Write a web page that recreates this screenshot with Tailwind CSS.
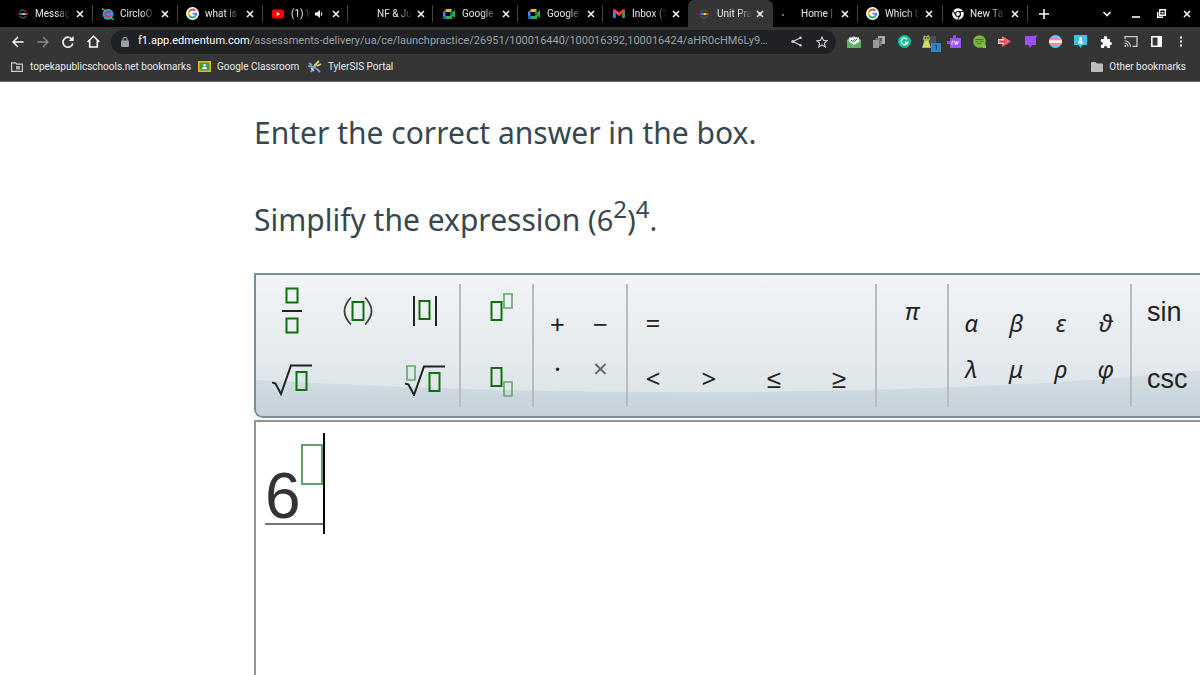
<!DOCTYPE html>
<html lang="en">
<head>
<meta charset="utf-8">
<title>Unit Practice</title>
<script src="https://cdn.jsdelivr.net/npm/@tailwindcss/browser@4"></script>
</head>
<body class="h-screen overflow-hidden flex flex-col bg-white font-['Roboto',sans-serif]">
<svg class="hidden">
  <defs>
    <symbol id="x" viewBox="0 0 8 8"><path d="M1 1l6 6M7 1l-6 6" stroke="#fff" stroke-width="1.5"/></symbol>
    <symbol id="google" viewBox="0 0 24 24"><circle cx="12" cy="12" r="12" fill="#fff"/><g fill="none" stroke-width="3.6"><path d="M17.2 7A7.2 7.2 0 0 0 5.8 8.4" stroke="#ea4335"/><path d="M5.8 8.4a7.2 7.2 0 0 0 0 7.2" stroke="#fbbc05"/><path d="M5.8 15.6a7.2 7.2 0 0 0 10.8 2" stroke="#34a853"/><path d="M16.6 17.6a7.2 7.2 0 0 0 2.5-5.4H12" stroke="#4285f4"/></g></symbol>
    <symbol id="meet" viewBox="0 0 24 20"><path d="M0 6l6-6v6z" fill="#ea4335"/><path d="M6 0h11v6H6z" fill="#fbbc04"/><path d="M0 6h5v9H0z" fill="#4285f4"/><path d="M0 14h6v6H2q-2 0-2-2z" fill="#1967d2"/><path d="M6 14h8v-3l5-5v12q0 2-2 2H6z" fill="#34a853"/><path d="M17 8l7-6v16l-7-6z" fill="#34a853"/><path d="M14 5h5v6l-5 3z" fill="#00832d"/></symbol>
    <symbol id="edm" viewBox="0 0 12 12"><path d="M2.500 4Q6 0 9.500 4M2.500 8Q6 12 9.500 8" fill="none" stroke="#4c4c4c" stroke-width="1.300"/><path d="M1.500 5h2v2h-2z" fill="#e6007e"/><path d="M3.500 5H6v2H3.500z" fill="#00b5e8"/><path d="M6 5h2.500v2H6z" fill="#ffd400"/><path d="M8.500 5h2v2h-2z" fill="#e6307e"/></symbol>
  </defs>
</svg>

<header class="shrink-0 bg-[#353535] border-b border-[#6b6b6b] text-[#e8eaed]">
  <!-- Tab strip -->
  <nav aria-label="Tabs" class="flex h-[27px] bg-black pl-2 text-[10px] pr-[3px]">
    <div class="flex w-[85px] items-center pl-[9px] my-[5px] border-r border-[#444]"><svg class="size-3 mr-[6px]"><use href="#edm"/></svg><span class="w-[35px] overflow-hidden whitespace-nowrap mask-r-from-60%">Messages</span><button aria-label="Close" class="ml-[6px]"><svg class="size-2"><use href="#x"/></svg></button></div>
    <div class="flex w-[85px] items-center pl-[9px] my-[5px] border-r border-[#444]"><svg class="size-3 mr-[6px]" viewBox="0 0 12 12"><circle cx="6" cy="6.300" r="5.500" fill="#2a9be8"/><path d="M8.300 4.500A2.700 2.700 0 1 0 8.300 8" fill="none" stroke="#e5322d" stroke-width="1.800"/><path d="M0 .5l3.500 2.500M9 9.500l3 2.500" stroke="#5bd02e" stroke-width="1.300"/></svg><span class="w-[35px] overflow-hidden whitespace-nowrap mask-r-from-60%">CircloO 2</span><button aria-label="Close" class="ml-[6px]"><svg class="size-2"><use href="#x"/></svg></button></div>
    <div class="flex w-[85px] items-center pl-[8px] my-[5px] border-r border-[#444]"><svg class="size-[13px] mr-[6px]"><use href="#google"/></svg><span class="w-[35px] overflow-hidden whitespace-nowrap mask-r-from-60%">what is the</span><button aria-label="Close" class="ml-[6px]"><svg class="size-2"><use href="#x"/></svg></button></div>
    <div class="flex w-[85px] items-center pl-[9px] my-[5px] border-r border-[#444]"><svg class="size-3 mr-[7px]" viewBox="0 0 12 12"><rect y="1.500" width="12" height="9" rx="2" fill="#f00"/><path d="M4.800 4v4l3.400-2z" fill="#fff"/></svg><span class="w-[19px] overflow-hidden whitespace-nowrap mask-r-from-60%">(1) We</span><svg class="size-2 ml-[5px]" viewBox="0 0 8 8"><path d="M0 2.600h2L5 0v8L2 5.400H0z" fill="#fff"/><path d="M6.200 2.200q1.400 1.800 0 3.600" fill="none" stroke="#fff"/></svg><button aria-label="Close" class="ml-[9px]"><svg class="size-2"><use href="#x"/></svg></button></div>
    <div class="flex w-[85px] items-center pl-[29px] my-[5px] border-r border-[#444]"><span class="w-[35px] overflow-hidden whitespace-nowrap mask-r-from-60%">NF &amp; Juice</span><button aria-label="Close" class="ml-[5px]"><svg class="size-2"><use href="#x"/></svg></button></div>
    <div class="flex w-[85px] items-center pl-[10px] my-[5px] border-r border-[#444]"><svg class="w-3 h-[10px] mr-[7px]"><use href="#meet"/></svg><span class="w-[35px] overflow-hidden whitespace-nowrap mask-r-from-60%">Google Meet</span><button aria-label="Close" class="ml-[5px]"><svg class="size-2"><use href="#x"/></svg></button></div>
    <div class="flex w-[85px] items-center pl-[10px] my-[5px] border-r border-[#444]"><svg class="w-3 h-[10px] mr-[7px]"><use href="#meet"/></svg><span class="w-[35px] overflow-hidden whitespace-nowrap mask-r-from-60%">Google Meet</span><button aria-label="Close" class="ml-[5px]"><svg class="size-2"><use href="#x"/></svg></button></div>
    <div class="flex w-[85px] items-center pl-[10px] my-[5px]"><svg class="w-3 h-[9px] mr-[7px]" viewBox="0 0 12 9"><path d="M0 1h2.800v8H1Q0 9 0 8z" fill="#4285f4"/><path d="M9.200 1H12v7q0 1-1 1H9.200z" fill="#34a853"/><path d="M0 2.500V1q.8-1.500 2.400-.6L6 3.200 9.600.4Q11.200-.5 12 1v1.500L6 7z" fill="#ea4335"/></svg><span class="w-[35px] overflow-hidden whitespace-nowrap mask-r-from-60%">Inbox (12)</span><button aria-label="Close" class="ml-[5px]"><svg class="size-2"><use href="#x"/></svg></button></div>
    <div class="flex w-[85px] items-center pl-[10px] rounded-t-[6px] bg-[#353535]"><svg class="size-3 mr-[7px]"><use href="#edm"/></svg><span class="w-[35px] overflow-hidden whitespace-nowrap mask-r-from-60%">Unit Practice</span><button aria-label="Close" class="ml-[4px]"><svg class="size-2"><use href="#x"/></svg></button></div>
    <div class="flex w-[85px] items-center pl-[9px] my-[5px] border-r border-[#444]"><svg class="size-3 mr-[7px]" viewBox="0 0 12 12"><rect y="6" width="2" height="2" fill="#2b7de9"/></svg><span class="w-[34px] overflow-hidden whitespace-nowrap mask-r-from-80%">Home | D</span><button aria-label="Close" class="ml-[6px]"><svg class="size-2"><use href="#x"/></svg></button></div>
    <div class="flex w-[85px] items-center pl-[8px] my-[5px] border-r border-[#444]"><svg class="size-[13px] mr-[6px]"><use href="#google"/></svg><span class="w-[35px] overflow-hidden whitespace-nowrap mask-r-from-60%">Which best</span><button aria-label="Close" class="ml-[5px]"><svg class="size-2"><use href="#x"/></svg></button></div>
    <div class="flex w-[85px] items-center pl-[9px] my-[5px] border-r border-[#444]"><svg class="size-3 mr-[6px]" viewBox="0 0 12 12"><circle cx="6" cy="6" r="5.800" fill="#fff"/><circle cx="6" cy="6" r="2.500" fill="#fff" stroke="#111" stroke-width="1.200"/><path d="M6 3.500h5M3.800 7.200L1.300 3M8.200 7.200L5.700 11.600" stroke="#111" stroke-width="1.100"/></svg><span class="w-[35px] overflow-hidden whitespace-nowrap mask-r-from-60%">New Tab</span><button aria-label="Close" class="ml-[6px]"><svg class="size-2"><use href="#x"/></svg></button></div>
    <button aria-label="New tab" class="ml-[11px]"><svg class="size-[10px]" viewBox="0 0 10 10"><path d="M5 0v10M0 5h10" stroke="#fff" stroke-width="1.500"/></svg></button>
    <div class="ml-auto flex items-center gap-[17px] pr-[6px]">
      <button aria-label="Search tabs"><svg class="size-[10px]" viewBox="0 0 10 10"><path d="M1.500 3L5 6.500 8.500 3" fill="none" stroke="#fff" stroke-width="1.600"/></svg></button>
      <button aria-label="Minimize" class="ml-[3px]"><svg class="size-2" viewBox="0 0 8 8"><path d="M0 7h8" stroke="#fff" stroke-width="1.600"/></svg></button>
      <button aria-label="Restore"><svg class="size-[9px]" viewBox="0 0 9 9"><path d="M2.700.7h5.600v5.600H2.700zM.7 3v5.300H6" fill="none" stroke="#fff" stroke-width="1.400"/><path d="M4.500 3h2v1.500h-2z" fill="#fff"/></svg></button>
      <button aria-label="Close window"><svg class="size-2"><use href="#x"/></svg></button>
    </div>
  </nav>

  <!-- Address bar -->
  <div class="flex h-[29px] items-center pl-[5px] pr-[6px]">
    <div class="grid w-[101px] grid-cols-4 justify-items-center">
      <button aria-label="Back"><svg class="size-3" viewBox="0 0 12 12"><path d="M11.500 6H1.500M6 1L1 6l5 5" fill="none" stroke="#fff" stroke-width="1.500"/></svg></button>
      <button aria-label="Forward"><svg class="size-3" viewBox="0 0 12 12"><path d="M.5 6h10M6 1l5 5-5 5" fill="none" stroke="#8a8a8a" stroke-width="1.400"/></svg></button>
      <button aria-label="Reload"><svg class="size-3" viewBox="0 0 12 12"><path d="M10 3.200A5 5 0 1 0 10.800 7.500" fill="none" stroke="#fff" stroke-width="1.600"/><path d="M11.600 0v5H6.800z" fill="#fff"/></svg></button>
      <button aria-label="Home"><svg class="size-[13px]" viewBox="0 0 13 13"><path d="M.6 7L6.500 1.200 12.400 7M2.700 5.500V12h7.600V5.500" fill="none" stroke="#fff" stroke-width="1.500"/></svg></button>
    </div>
    <div class="ml-[5px] flex h-6 min-w-0 flex-1 items-center rounded-full bg-[#202124] pl-[10px] pr-2">
      <svg class="mr-[9px] h-[10px] w-2 shrink-0" viewBox="0 0 8 10"><rect y="3.500" width="8" height="6.500" rx="1" fill="#9aa0a6"/><path d="M2 4V2.500a2 2 0 0 1 4 0V4" fill="none" stroke="#9aa0a6" stroke-width="1.200"/></svg>
      <div role="textbox" aria-label="Address" class="flex-1 whitespace-nowrap text-[11px] text-[#9aa0a6]"><span class="text-white">f1.app.edmentum.com</span>/assessments-delivery/ua/ce/launchpractice/26951/100016440/100016392,100016424/aHR0cHM6Ly9…</div>
      <button aria-label="Share"><svg class="size-[11px]" viewBox="0 0 11 11"><path d="M10 1.500L2 5.500l8 4" fill="none" stroke="#ccc" stroke-width="1.200"/><circle cx="9.500" cy="1.700" r="1.300" fill="#ccc"/><circle cx="1.800" cy="5.500" r="1.500" fill="#ccc"/><circle cx="9.500" cy="9.300" r="1.300" fill="#ccc"/></svg></button>
      <button aria-label="Bookmark" class="ml-[14px]"><svg class="size-3" viewBox="0 0 12 12"><path d="M6 1l1.500 3.400 3.700.3-2.800 2.500.8 3.700L6 9l-3.200 1.900.8-3.700L.8 4.700l3.700-.3z" fill="none" stroke="#ccc" stroke-width="1.100"/></svg></button>
    </div>
    <div class="ml-[5px] grid w-[353px] shrink-0 grid-cols-14 items-center justify-items-center">
      <button aria-label="Mail"><svg class="h-3 w-[14px]" viewBox="0 0 14 12"><path d="M0 4l7-4 7 4v8H0z" fill="#7cc47f"/><path d="M2 1.500h10V6L7 9 2 6z" fill="#fff"/><path d="M0 4.500L7 9l7-4.500V12H0z" fill="#62b066"/><path d="M4 3.800l1.500 2L8 3M6.500 4.800l1 1L10 3" fill="none" stroke="#3952c4"/></svg></button>
      <button aria-label="Copy"><svg class="size-3" viewBox="0 0 12 12"><path d="M5 0h7v8H5z" fill="#aaa"/><path d="M2.500 2h6v8h-6z" fill="#777"/><path d="M0 4h6v8H0z" fill="#999"/><path d="M7 2h2v3H7z" fill="#555"/></svg></button>
      <button aria-label="Grammarly"><svg class="size-[13px]" viewBox="0 0 13 13"><circle cx="6.500" cy="6.500" r="6.500" fill="#15c39a"/><path d="M9 4.200A3.300 3.300 0 1 0 9.600 7.500H7" fill="none" stroke="#fff" stroke-width="1.300"/></svg></button>
      <button aria-label="Extension, 1 notice" class="relative"><svg class="h-[13px] w-[14px]" viewBox="0 0 14 13"><path d="M8 1h6v8H8z" fill="#46505a"/><path d="M2 0l2 1.500L7 0l1 4-1 2 2 7H0l2-7-1-2z" fill="#aab85a"/><path d="M3 6h3l2 6H1z" fill="#d9dc6a"/><circle cx="3.500" cy="3" r=".8" fill="#222"/><circle cx="6" cy="3" r=".8" fill="#222"/></svg><span class="absolute left-[9px] top-[8px] h-[9px] w-[10px] bg-[#2d86c0] text-center text-[8px] leading-[9px] text-[#10202c]">1</span></button>
      <button aria-label="Read&amp;Write"><svg class="h-[13px] w-[14px]" viewBox="0 0 14 13"><path d="M3 3h3V1q2-2 3 0v2h5v10H3V9H0V6h3z" fill="#9b51f5"/><path d="M5 10V7q0-1 1.500-1M7.500 6l.9 3.500.9-3 .9 3L11.500 6" fill="none" stroke="#fff" stroke-width=".9"/></svg></button>
      <button aria-label="Notes"><svg class="size-[13px]" viewBox="0 0 13 13"><circle cx="6.500" cy="6.500" r="6.300" fill="#7cb342"/><path d="M2.500 4.500h8M2.500 6.500h3M7 6.500h3.500M4 8.500h4" stroke="#3f6320" stroke-width=".8"/><path d="M9.500 9.500H13V13H9.500z" fill="#8bc34a"/></svg></button>
      <button aria-label="Screencast"><svg class="h-[11px] w-[13px]" viewBox="0 0 13 11"><path d="M4 0l9 5.500L4 11z" fill="#ff6b6b"/><path d="M0 3h6v5H0z" fill="#ffd9d9"/><path d="M1 4.500h5v2H1zM6 4l3 1.500L6 7z" fill="#e33"/></svg></button>
      <button aria-label="Comment"><svg class="size-[13px]" viewBox="0 0 13 13"><path d="M1 1h9l3-1-1 3v7H8l-2 3-1-3H1z" fill="#9b51f5"/></svg></button>
      <button aria-label="Flag"><svg class="size-[13px]" viewBox="0 0 13 13"><clipPath id="fc"><circle cx="6.500" cy="6.500" r="6.500"/></clipPath><g clip-path="url(#fc)"><path d="M0 0h13v13H0z" fill="#5bcefa"/><path d="M0 2.800h13v7.400H0z" fill="#f58a9d"/><path d="M0 5.300h13v2.400H0z" fill="#fff"/></g></svg></button>
      <button aria-label="Class"><svg class="size-[13px]" viewBox="0 0 13 13"><path d="M0 0h13v10H8.500l-2 3-2-3H0z" fill="#3fc1e6"/><circle cx="6.500" cy="3.500" r="1.500" fill="#fff"/><path d="M4 8.500q0-3.500 2.500-3.500T9 8.500z" fill="#fff"/></svg></button>
      <button aria-label="Extensions"><svg class="size-3" viewBox="0 0 12 12"><path d="M1 3h3q-.6-3 1.500-3T7 3h3v3q2 0 2 1.500T10 9v3H7.300Q7 9.800 5.600 9.800T4 12H1V9q2-.2 2-1.600T.8 6z" fill="#fff"/></svg></button>
      <button aria-label="Cast"><svg class="h-[11px] w-[14px]" viewBox="0 0 14 11"><path d="M1 3V.7h12v9.600H8.500" fill="none" stroke="#ccc" stroke-width="1.300"/><path d="M.5 4.700a6 6 0 0 1 6 6M.5 7.200a3.500 3.500 0 0 1 3.500 3.500" fill="none" stroke="#ccc" stroke-width="1.100"/><circle cx="1.300" cy="10" r="1" fill="#ccc"/></svg></button>
      <button aria-label="Side panel"><svg class="size-[11px]" viewBox="0 0 11 11"><path d="M.8.8h9.400v9.400H.8z" fill="none" stroke="#fff" stroke-width="1.600"/><path d="M6.500 1H10v9H6.500z" fill="#fff"/></svg></button>
      <button aria-label="Menu"><svg class="h-[11px] w-1" viewBox="0 0 4 11"><path d="M1 .5h2v2H1zM1 4.500h2v2H1zM1 8.500h2v2H1z" fill="#fff"/></svg></button>
    </div>
  </div>

  <!-- Bookmarks bar -->
  <nav aria-label="Bookmarks" class="flex h-[25px] items-center pb-[4px] pl-[11px] pr-[14px] text-[10px]">
    <a href="#" class="flex w-[187px] items-center gap-[7px] whitespace-nowrap"><svg class="h-[10px] w-3" viewBox="0 0 12 10"><path d="M.6.8h4l1.200 1.400h5.600v7.200H.6z" fill="none" stroke="#ccc" stroke-width="1.200"/><path d="M5 4h4v3.500H5z" fill="#aaa"/></svg>topekapublicschools.net bookmarks</a>
    <a href="#" class="flex w-[110px] items-center gap-[6px] whitespace-nowrap"><svg class="h-[11px] w-[13px]" viewBox="0 0 13 11"><path d="M0 0h13v11H0z" fill="#f4b400"/><path d="M1.600 1.600h9.800v7.800H1.600z" fill="#2e9e5b"/><circle cx="6.500" cy="4.200" r="1.300" fill="#fff"/><path d="M3.800 8q0-2 2.700-2t2.700 2z" fill="#fff"/></svg>Google Classroom</a>
    <a href="#" class="flex items-center gap-[6px] whitespace-nowrap"><svg class="h-[13px] w-[14px]" viewBox="0 0 14 13"><path d="M1 3l3 2M0 6l5 1 4 2 3 3M3 12l2-4 4-4" fill="none" stroke="#7f9fd0" stroke-width="1.900"/><path d="M6 6l5-5M9 6l4-2" stroke="#d8d36a" stroke-width="1.800"/><path d="M3 8l3 3" stroke="#dfe9f5" stroke-width="1.300"/></svg>TylerSIS Portal</a>
    <a href="#" class="ml-auto flex items-center gap-[6px]"><svg class="h-[10px] w-3" viewBox="0 0 12 10"><path d="M0 1q0-1 1-1h3.500L6 1.500h5q1 0 1 1V9q0 1-1 1H1q-1 0-1-1z" fill="#bdbdbd"/></svg>Other bookmarks</a>
  </nav>
</header>

<main class="flex min-h-0 flex-1 flex-col pl-[254px] font-['Noto_Sans',sans-serif] text-[#37474f]">
  <p class="mt-[29px] text-[30px] leading-[44px]">Enter the correct answer in the box.</p>
  <p class="mt-[42px] h-[44px] text-[30px] leading-[44px]">Simplify the expression <span class="text-[29px] leading-none">(6<span class="align-[13px] text-[24px]">2</span>)<span class="align-[13px] text-[24px]">4</span>.</span></p>

  <!-- Equation toolbar -->
  <div role="toolbar" aria-label="Equation tools" class="relative mt-[32px] flex h-[145px] shrink-0 overflow-hidden rounded-bl-[9px] border-2 border-r-0 border-[#758e9b] bg-linear-to-b from-[#f2f4f6] to-[#dae3e8] py-[9px] text-[26px] text-[#222]">
    <svg class="absolute inset-0 size-full" viewBox="0 0 944 141" preserveAspectRatio="none"><defs><linearGradient id="wave" x2="0" y2="1"><stop stop-color="#d5dfe5"/><stop offset="1" stop-color="#c4d1d9"/></linearGradient></defs><path d="M0 105C200 116 350 118 500 117 700 115 850 106 944 95V141H0z" fill="url(#wave)"/></svg>
    <div class="relative grid w-[205px] grid-cols-[67px_65px_69px] grid-rows-[54px_54px] gap-y-[15px] place-items-center border-r-2 border-[#bbb] pl-[2px]">
      <button aria-label="Fraction"><svg class="h-12 w-5" viewBox="0 0 20 48"><path d="M4.500 1.500h11v14h-11zM4.500 31.500h11v14h-11z" fill="none" stroke="#107010" stroke-width="2"/><path d="M0 24h20" stroke="#222" stroke-width="2"/></svg></button>
      <button aria-label="Parentheses"><svg class="h-7 w-[30px]" viewBox="0 0 30 28"><path d="M8 .5Q-5 14 8 27.500M22 .5q13 13.500 0 27" fill="none" stroke="#444" stroke-width="1.800"/><path d="M9.500 5h11v18h-11z" fill="none" stroke="#107010" stroke-width="2"/></svg></button>
      <button aria-label="Absolute value"><svg class="h-[30px] w-[26px]" viewBox="0 0 26 30"><path d="M2 0v30M24 0v30" stroke="#222" stroke-width="2"/><path d="M7.500 5h10v18h-10z" fill="none" stroke="#107010" stroke-width="2"/></svg></button>
      <button aria-label="Square root"><svg class="h-8 w-10" viewBox="0 0 40 32"><path d="M0 18.500l3.500 1L9 30 19 1.500h21" fill="none" stroke="#222" stroke-width="2"/><path d="M24.500 8h10v18h-10z" fill="none" stroke="#107010" stroke-width="2"/></svg></button>
      <button aria-label="Nth root" class="col-start-3"><svg class="h-8 w-10" viewBox="0 0 40 32"><path d="M0 19.500l3.500 1L9 31 19 2.500h21" fill="none" stroke="#222" stroke-width="2"/><path d="M2 2h8v14H2z" fill="none" stroke="#6aa96a" stroke-width="1.700"/><path d="M24.500 9h10v18h-10z" fill="none" stroke="#107010" stroke-width="2"/></svg></button>
    </div>
    <div class="relative grid w-[73px] grid-rows-[54px_54px] gap-y-[15px] place-items-center border-r-2 border-[#bbb] pl-[11px]">
      <button aria-label="Superscript"><svg class="h-[36px] w-6" viewBox="0 0 24 36"><path d="M1.500 9h10v18h-10z" fill="none" stroke="#107010" stroke-width="2"/><path d="M14 1h8v14h-8z" fill="none" stroke="#6aa96a" stroke-width="1.700"/></svg></button>
      <button aria-label="Subscript"><svg class="h-[34px] w-6" viewBox="0 0 24 34"><path d="M1.500 5h10v18h-10z" fill="none" stroke="#107010" stroke-width="2"/><path d="M14 19h8v14h-8z" fill="none" stroke="#6aa96a" stroke-width="1.700"/></svg></button>
    </div>
    <div class="relative grid w-[94px] grid-cols-[43px_43px] grid-rows-[44px_44px] place-items-center border-r-2 border-[#bbb] pl-[2px] pt-[18px] leading-none">
      <button>+</button><button>−</button><button>·</button><button class="text-[#666]">×</button>
    </div>
    <div class="relative grid w-[249px] grid-cols-[50px_62px_68px_62px] grid-rows-[50px_60px] place-items-center border-r-2 border-[#bbb] pt-[14px] leading-none">
      <button>=</button><button class="col-start-1 row-start-2">&lt;</button><button class="row-start-2">&gt;</button><button class="row-start-2">≤</button><button class="row-start-2">≥</button>
    </div>
    <div class="relative flex w-[72px] items-start justify-center border-r-2 border-[#bbb] pt-[15px] text-[24px] italic leading-none">
      <button>π</button>
    </div>
    <div class="relative grid w-[183px] grid-cols-4 grid-rows-[46px_46px] place-items-center border-r-2 border-[#bbb] pr-[2px] pt-[16px] text-[24px] italic leading-none">
      <button>α</button><button>β</button><button>ε</button><button>ϑ</button><button>λ</button><button>μ</button><button>ρ</button><button>φ</button>
    </div>
    <div class="relative grid flex-1 grid-rows-[56px_78px] items-center justify-items-start pl-[15px] font-['Liberation_Sans',sans-serif] text-[27px] leading-none">
      <button>sin</button><button>csc</button>
    </div>
  </div>

  <!-- Answer box -->
  <div role="textbox" aria-label="Answer" class="mt-[2px] flex flex-1 items-start overflow-hidden border-l-2 border-t-2 border-[#929292] bg-white pl-[9px] pt-[11px]">
    <div class="flex h-[92px] items-start border-b-2 border-[#6f756f]">
      <span class="pt-[31px] font-['Liberation_Sans',sans-serif] text-[64px] leading-[64px] text-[#333]">6</span>
      <span class="mt-[11px] h-[41px] w-[22px] border-2 border-[#64a064]"></span>
    </div>
    <span class="h-[101px] w-[2px] bg-black"></span>
  </div>
</main>
</body>
</html>
